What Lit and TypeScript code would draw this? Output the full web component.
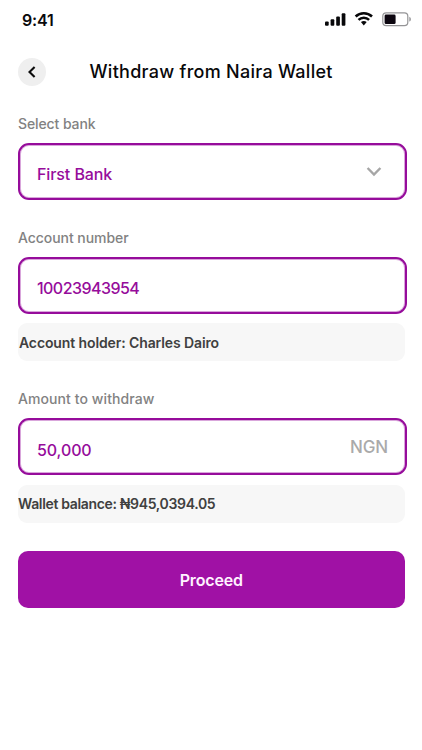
import { LitElement, html, css, svg, nothing } from "lit";
import { customElement, property } from "lit/decorators.js";

@customElement("status-bar")
class StatusBar extends LitElement {
  static styles = css`
    :host { display: flex; height: 40px; padding: 0 11px 0 22px; justify-content: space-between; }
    .time { font-size: 16px; font-weight: 600; line-height: 20px; margin-top: 10px; letter-spacing: -0.2px; color: #0a0a0c; }
    .icons { display: block; margin-top: 8px; }
  `;
  render() {
    return html`
      <span class="time">9:41</span>
      <svg class="icons" width="88" height="24" viewBox="323 8 88 24">
        <g fill="#08080a">
          <rect x="325" y="21.5" width="3.7" height="4.3" rx="1" />
          <rect x="330.6" y="19.2" width="3.7" height="6.6" rx="1" />
          <rect x="336.2" y="16.4" width="3.7" height="9.4" rx="1" />
          <rect x="341.7" y="13.2" width="3.7" height="12.6" rx="1" />
        </g>
        <g fill="none" stroke="#08080a" stroke-width="2.5">
          <path d="M355.6 16.5 A11.8 11.8 0 0 1 372 16.5" />
          <path d="M358.5 19.9 A7.6 7.6 0 0 1 369.1 19.9" />
        </g>
        <path d="M360.9 22.1 A4.7 4.7 0 0 1 366.7 22.1 L363.8 25.4 Z" fill="#08080a" />
        <rect x="382.8" y="12.9" width="25" height="12.7" rx="3.4" fill="none" stroke="#949496" stroke-width="1.2" />
        <rect x="384.6" y="14.6" width="11" height="9.5" rx="1.4" fill="#0c0610" />
        <path d="M409.3 16.8 C411.4 17.6 411.4 20.8 409.3 21.6 Z" fill="#949496" />
      </svg>
    `;
  }
}

@customElement("form-field")
class FormField extends LitElement {
  @property() label = "";
  @property() value = "";
  @property() kind = "";
  @property() hint = "";
  static styles = css`
    :host { display: block; }
    .label { font-size: 14px; font-weight: 500; line-height: 20px; color: #828282; white-space: nowrap; }
    .label.bank { letter-spacing: -0.1px; }
    .label.holder { letter-spacing: -0.05px; }
    .label.balance { letter-spacing: 0.09px; }
    .box {
      box-sizing: border-box; width: 389px; height: 57px; margin-top: 9px; padding: 5px 17px 0 17px;
      border: 2px solid #960c9b; border-radius: 11px; background: #fff; box-shadow: inset 0 0 0 1px #d9a6db;
      display: flex; align-items: center; justify-content: space-between;
    }
    .balance.box { padding-top: 7px; }
    .value { font-size: 16px; font-weight: 550; line-height: 20px; color: #960c9b; white-space: nowrap; }
    .bank .value { letter-spacing: -0.1px; }
    .holder .value { letter-spacing: -0.55px; }
    .balance .value { letter-spacing: -0.1px; }
    .unit { font-size: 17px; font-weight: 450; line-height: 20px; color: #aaa; margin-bottom: 6px; letter-spacing: -0.1px; }
    .chevron { margin: 0 6px 6px 0; }
    .hint {
      box-sizing: border-box; width: 386.5px; height: 38px; margin-top: 9px; padding-left: 1px; border-radius: 9px;
      background: #f7f7f7; display: flex; align-items: center; font-size: 14px; font-weight: 600; color: #404040;
      white-space: nowrap;
    }
    .hint.holder { letter-spacing: -0.11px; }
    .hint.balance { letter-spacing: -0.34px; padding: 0 0 2px; margin-top: 10px; }
  `;
  render() {
    return html`
      <div class="label ${this.kind}">${this.label}</div>
      <div class="box ${this.kind}">
        <span class="value">${this.value}</span>
        ${this.kind === "bank"
          ? html`<svg class="chevron" width="16" height="12" viewBox="0 0 16 12">
              ${svg`<path d="M1.6 3 L8 9.6 L14.4 3" fill="none" stroke="#a6a6a6" stroke-width="2.4" />`}
            </svg>`
          : nothing}
        ${this.kind === "balance" ? html`<span class="unit">NGN</span>` : nothing}
      </div>
      ${this.hint ? html`<div class="hint ${this.kind}">${this.hint}</div>` : nothing}
    `;
  }
}

@customElement("app-root")
class AppRoot extends LitElement {
  static styles = css`
    :host {
      display: block; width: 422px; height: 750px; overflow: hidden; background: #fff;
      font-family: Inter, "Liberation Sans", sans-serif;
    }
    .header { display: flex; align-items: center; height: 64px; padding-left: 18px; }
    .back {
      width: 28px; height: 28px; border-radius: 50%; border: 0; padding: 0; background: #efefef;
      display: grid; place-items: center;
    }
    .title {
      margin: 0 0 0 43.5px; font-size: 18px; font-weight: 550; line-height: 24px; color: #08080a;
      letter-spacing: 0.28px; white-space: nowrap;
    }
    .form { padding: 10px 0 0 18px; display: flex; flex-direction: column; }
    .number { margin-top: 28px; }
    .amount { margin-top: 28px; }
    .proceed {
      width: 386.5px; height: 57px; margin-top: 28px; border: 0; border-radius: 10px; background: #a011a5;
      color: #fff3ff; font: 600 16px/20px Inter, "Liberation Sans", sans-serif; letter-spacing: -0.15px;
    }
  `;
  render() {
    return html`
      <status-bar></status-bar>
      <div class="header">
        <button class="back" aria-label="Back">
          <svg width="12" height="14" viewBox="0 0 12 14">
            <path d="M8.6 1.9 L3.5 7 L8.6 12.1" fill="none" stroke="#0c0c0c" stroke-width="2.1" />
          </svg>
        </button>
        <h1 class="title">Withdraw from Naira Wallet</h1>
      </div>
      <div class="form">
        <form-field label="Select bank" value="First Bank" kind="bank"></form-field>
        <form-field class="number" label="Account number" value="10023943954" kind="holder"
          hint="Account holder: Charles Dairo"></form-field>
        <form-field class="amount" label="Amount to withdraw" value="50,000" kind="balance"
          hint="Wallet balance: ₦945,0394.05"></form-field>
        <button class="proceed">Proceed</button>
      </div>
    `;
  }
}
